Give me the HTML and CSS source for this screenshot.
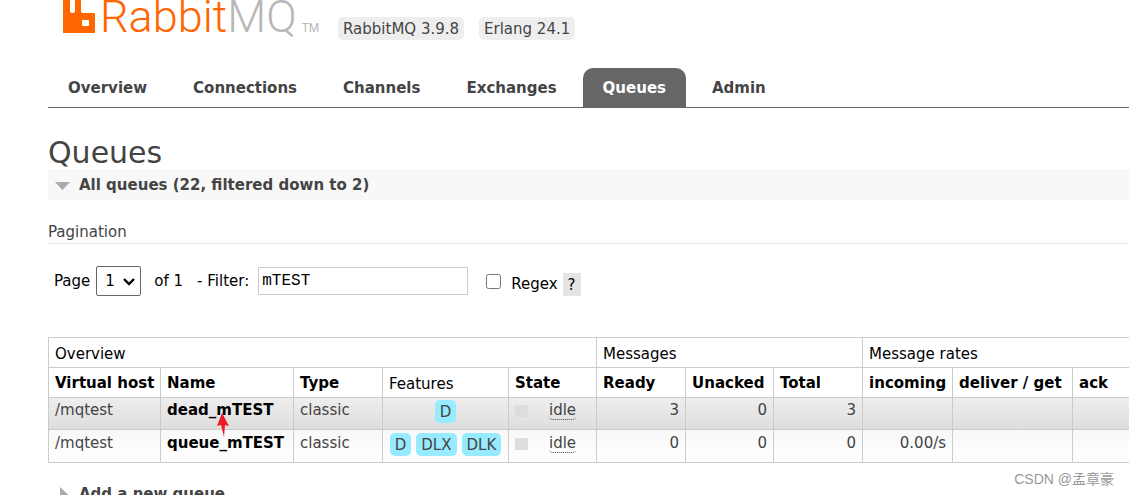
FILE: index.html
```html
<!DOCTYPE html>
<html lang="en">
<head>
<meta charset="utf-8">
<title>RabbitMQ Management</title>
<meta name="viewport" content="width=device-width, initial-scale=1">
<link rel="stylesheet" href="styles.css">
</head>
<body>
<header class="header">
  <a class="logo" href="#" aria-label="RabbitMQ">
    <svg class="logo-mark" width="34" height="34" viewBox="0 0 34 34" aria-hidden="true">
      <path fill="#f60" fill-rule="evenodd" d="M1 0H8V11Q8 13 10 13H11Q13 13 13 11V0H19V11Q19 13 21 13H32Q33 13 33 14V32Q33 33 32 33H1ZM21 20Q20 20 20 21V25Q20 26 21 26H26Q27 26 27 25V21Q27 20 26 20Z"/>
    </svg>
    <span class="logo-text">Rabbit<span class="logo-mq">MQ</span></span>
    <span class="logo-tm">TM</span>
  </a>
  <span class="version">RabbitMQ 3.9.8</span>
  <span class="version">Erlang 24.1</span>
</header>
<nav class="tabs">
  <a class="tab" href="#">Overview</a>
  <a class="tab" href="#">Connections</a>
  <a class="tab" href="#">Channels</a>
  <a class="tab" href="#">Exchanges</a>
  <a class="tab tab-selected" href="#">Queues</a>
  <a class="tab" href="#">Admin</a>
</nav>
<main class="main">
  <h1 class="title">Queues</h1>
  <h2 class="section section-open"><svg class="caret" width="15" height="15" viewBox="0 0 15 15" aria-hidden="true"><path fill="#aaa" d="M0 4H15L7.500 12Z"/></svg>All queues (22, filtered down to 2)</h2>
  <h3 class="subtitle">Pagination</h3>
  <form class="filter">
    <label for="page">Page</label>
    <span class="select-wrap">
      <select class="page-select" id="page"><option>1</option></select>
      <svg class="chevron" width="12" height="8" viewBox="0 0 12 8" aria-hidden="true"><path fill="none" stroke="#000" stroke-width="2.400" d="M1 1L6 6L11 1"/></svg>
    </span>
    <span class="of">of 1</span>
    <label class="filter-label" for="filter">- Filter:</label>
    <input class="filter-input" id="filter" type="text" value="mTEST">
    <input class="regex" id="regex" type="checkbox">
    <label class="regex-label" for="regex">Regex</label>
    <button class="help" type="button">?</button>
  </form>
  <table class="queues">
    <colgroup>
      <col class="c-vhost"><col class="c-name"><col class="c-count"><col class="c-features"><col class="c-state">
      <col class="c-count"><col class="c-unacked"><col class="c-count"><col class="c-rate"><col class="c-deliver"><col>
    </colgroup>
    <thead>
      <tr><th colspan="5">Overview</th><th colspan="3">Messages</th><th colspan="3">Message rates</th></tr>
      <tr>
        <th class="sort">Virtual host</th><th class="sort">Name</th><th class="sort">Type</th><th>Features</th><th class="sort">State</th>
        <th class="sort">Ready</th><th class="sort">Unacked</th><th class="sort">Total</th>
        <th class="sort">incoming</th><th class="sort">deliver / get</th><th class="sort">ack</th>
      </tr>
    </thead>
    <tbody>
      <tr class="row-alt">
        <td>/mqtest</td>
        <td><a class="queue" href="#">dead_mTEST<svg class="pointer" width="12" height="24" viewBox="0 0 12 24" aria-hidden="true"><path fill="#ed1c24" d="M5 0L12 13L8 12L7 24L4 12L0 13Z"/></svg></a></td>
        <td>classic</td>
        <td><div class="features"><abbr class="feature">D</abbr></div></td>
        <td><div class="state"><i class="status"></i><abbr class="idle">idle</abbr></div></td>
        <td class="num">3</td><td class="num">0</td><td class="num">3</td><td></td><td></td><td></td>
      </tr>
      <tr class="row">
        <td>/mqtest</td>
        <td><a class="queue" href="#">queue_mTEST</a></td>
        <td>classic</td>
        <td><div class="features"><abbr class="feature">D</abbr><abbr class="feature">DLX</abbr><abbr class="feature">DLK</abbr></div></td>
        <td><div class="state"><i class="status"></i><abbr class="idle">idle</abbr></div></td>
        <td class="num">0</td><td class="num">0</td><td class="num">0</td><td class="num">0.00/s</td><td></td><td></td>
      </tr>
    </tbody>
  </table>
  <h2 class="section section-closed"><svg class="caret" width="15" height="15" viewBox="0 0 15 15" aria-hidden="true"><path fill="#aaa" d="M5 0L13 7.500L5 15Z"/></svg>Add a new queue</h2>
</main>
<div class="watermark">CSDN @孟章豪</div>
</body>
</html>
```
FILE: styles.css
```css
* { box-sizing: border-box; }
html { overflow: hidden; }
body {
  margin: 0;
  padding-left: 48px;
  height: 100vh;
  overflow: hidden;
  background: #fff;
  color: #444;
  font: 15px/18px Verdana, "DejaVu Sans", sans-serif;
}
a { color: inherit; text-decoration: none; }

.header {
  display: flex;
  align-items: flex-start;
  gap: 15px;
  height: 68px;
  padding-left: 14px;
}
.logo { display: flex; width: 261px; }
.logo-mark { flex: none; }
.logo-text {
  margin: -10px 0 0 4px;
  color: #f60;
  font: 300 45px/54px Roboto, sans-serif;
}
.logo-mq { color: #b7b7b7; }
.logo-tm {
  margin: 20px 0 0 5px;
  color: #b7b7b7;
  font: 12px/17px Roboto, sans-serif;
}
.version {
  margin-top: 17px;
  padding: 3px 5px 2px;
  border-radius: 5px;
  background: #eee;
}

.tabs {
  display: flex;
  gap: 6px;
  border-bottom: 1px solid #666;
}
.tab {
  padding: 11px 20px 10px;
  border-radius: 10px 10px 0 0;
  font-weight: bold;
}
.tab-selected { background: #666; color: #fff; }

.title {
  margin: 28px 0 0;
  font-size: 30px;
  font-weight: normal;
  line-height: 33px;
}
.section {
  display: flex;
  align-items: center;
  gap: 9px;
  margin: 0;
  padding: 7px 7px 6px;
  font-size: 15px;
}
.section-open { background: #f8f8f8; }
.section-closed { margin-top: 15px; }
.caret { flex: none; }
.subtitle {
  margin: 23px 0 0;
  padding-bottom: 2px;
  border-bottom: 1px solid #e4e4e4;
  font-size: 15px;
  font-weight: normal;
}

.filter {
  display: flex;
  align-items: center;
  height: 30px;
  margin: 22px 0 41px;
  padding-left: 6px;
  color: #000;
}
.select-wrap { position: relative; margin-left: 6px; }
.page-select {
  display: block;
  width: 45px;
  height: 30px;
  padding: 0 8px;
  appearance: none;
  border: 1px solid #666;
  border-radius: 2px;
  background: #fff;
  color: #000;
  font: inherit;
}
.chevron { position: absolute; right: 6px; top: 12px; pointer-events: none; }
.of { margin-left: 13px; }
.filter-label { margin-left: 14px; }
.filter-input {
  width: 210px;
  height: 28px;
  margin-left: 9px;
  padding: 0 3px;
  border: 1px solid #ccc;
  color: #000;
  font: 16px "Courier New", "Liberation Mono", monospace;
}
.regex { width: 15px; height: 15px; margin: 0 10px 0 18px; }
.regex-label { padding-top: 5px; }
.help {
  align-self: flex-end;
  margin: 0 0 0 5px;
  padding: 3px 5px 2px;
  border: 0;
  background: #e4e4e4;
  color: #000;
  font: inherit;
}

.queues {
  width: 100%;
  table-layout: fixed;
  border-collapse: collapse;
  border-left: 1px solid #ccc;
}
.c-vhost { width: 112px; }
.c-name { width: 133px; }
.c-count { width: 89px; }
.c-unacked { width: 88px; }
.c-features { width: 126px; }
.c-state { width: 88px; }
.c-rate { width: 90px; }
.c-deliver { width: 120px; }
.queues th, .queues td {
  border: 1px solid #ccc;
  white-space: nowrap;
}
.queues th:last-child, .queues td:last-child { border-right: 0; }
.queues th {
  height: 30px;
  padding: 2px 6px 0;
  color: #000;
  font-weight: normal;
  text-align: left;
}
.queues .sort { padding: 0 6px; font-weight: bold; }
.queues td { height: 33px; padding: 4px 6px 2px; vertical-align: top; }
.queues .row-alt td { height: 32px; padding-top: 3px; }
.queues .num { text-align: right; }
.row-alt { background: linear-gradient(#eee, #ddd); }
.row { background: linear-gradient(#f8f8f8, #fff); }
.queue { position: relative; color: #000; font-weight: bold; }
.pointer { position: absolute; left: 50px; top: 12px; }
.features { display: flex; justify-content: center; gap: 5px; margin-top: -1px; }
.feature {
  padding: 3px 5px 2px;
  border-radius: 5px;
  background: #98ebff;
}
.state { display: flex; }
.status { width: 13px; height: 12px; margin: 4px 21px 0 0; background: #ddd; }
.idle { border-bottom: 1px dotted #444; border-radius: 4px; }

.watermark {
  position: absolute;
  right: 15px;
  bottom: 6px;
  color: #999;
  font: 14px/20px "Liberation Sans", "Noto Sans CJK SC", sans-serif;
}
```
